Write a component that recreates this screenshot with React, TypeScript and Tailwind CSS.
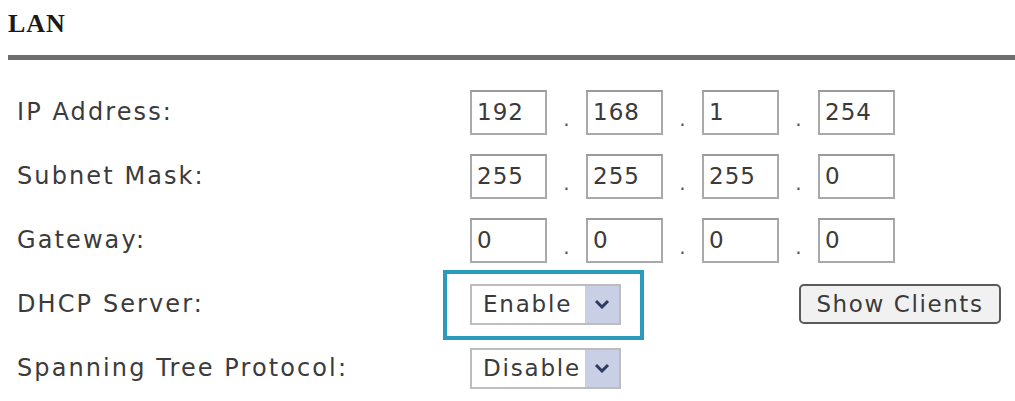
const ui = "font-['DejaVu_Sans',Verdana,sans-serif]";

const rows: { label: string; octets?: string[] }[] = [
  { label: 'IP Address:', octets: ['192', '168', '1', '254'] },
  { label: 'Subnet Mask:', octets: ['255', '255', '255', '0'] },
  { label: 'Gateway:', octets: ['0', '0', '0', '0'] },
];

function Octet({ value }: { value: string }) {
  return (
    <span className="flex h-[45px] w-[77px] items-center border-2 border-[#a9a9a9] border-t-[#9a9a9a] bg-white pl-[5px] text-[23px] tracking-[1px] text-[#3a3a3a]">
      {value}
    </span>
  );
}

function Dot() {
  return (
    <span className="flex h-[45px] w-[39px] items-end justify-center pb-[6px] text-[20px] leading-none text-[#555]">
      .
    </span>
  );
}

function Select({ value }: { value: string }) {
  return (
    <span className="flex h-[41px] w-[151px] items-stretch border-2 border-[#bdbdbd] bg-white">
      <span className="flex flex-1 items-center pl-[11px] text-[23px] tracking-[1.8px] text-[#3a3a3a]">
        {value}
      </span>
      <span className="flex w-[34px] items-center justify-center bg-[#c9d0e6]">
        <svg width="16" height="10" viewBox="0 0 16 10">
          <path d="M2 2 L8 8 L14 2" fill="none" stroke="#2d3a63" strokeWidth="3" />
        </svg>
      </span>
    </span>
  );
}

function Row({ label, children }: { label: string; children: React.ReactNode }) {
  return (
    <div className="flex h-[64px] items-center">
      <span className="w-[470px] shrink-0 pl-[17px] text-[24px] tracking-[2.1px] text-[#3b3b3b]">
        {label}
      </span>
      {children}
    </div>
  );
}

export default function App() {
  return (
    <div className={`h-[401px] w-[1015px] overflow-hidden bg-white ${ui}`}>
      <h1 className="pl-[8px] pt-[10px] font-['Liberation_Serif',serif] text-[26px] font-bold leading-[28px] tracking-[1px] text-[#1a1a1a]">
        LAN
      </h1>
      <div className="ml-[8px] mt-[17px] h-[5px] bg-[#6e6e6e] blur-[0.6px]" />
      <div className="mt-[20px] flex flex-col">
        {rows.map((r) => (
          <Row key={r.label} label={r.label}>
            <div className="flex items-center">
              {r.octets!.map((o, i) => (
                <div key={i} className="flex items-center">
                  {i > 0 && <Dot />}
                  <Octet value={o} />
                </div>
              ))}
            </div>
          </Row>
        ))}
        <Row label="DHCP Server:">
          <div className="relative">
            <span className="absolute -left-[27px] -top-[14px] h-[70px] w-[201px] border-4 border-[#2a9bbb]" />
            <Select value="Enable" />
          </div>
          <button className="ml-[178px] flex h-[40px] w-[202px] items-center justify-center rounded-[5px] border-2 border-[#5a5a5a] bg-[#f1f1f1] text-[23px] tracking-[1.6px] text-[#3a3a3a]">
            Show Clients
          </button>
        </Row>
        <Row label="Spanning Tree Protocol:">
          <Select value="Disable" />
        </Row>
      </div>
    </div>
  );
}
